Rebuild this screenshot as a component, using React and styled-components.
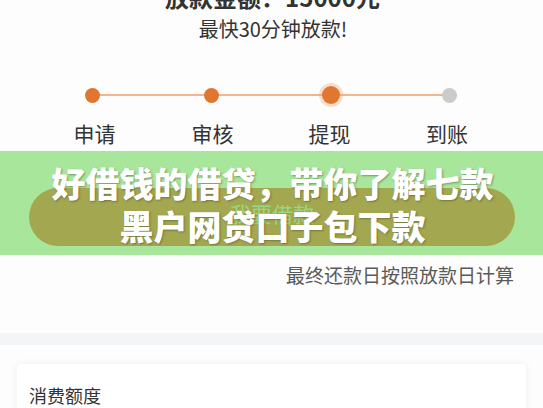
import React from "react";
import styled, { createGlobalStyle } from "styled-components";

const Global = createGlobalStyle`
  html, body { margin: 0; padding: 0; background: #fdfdfd; }
  body { font-family: "Noto Sans CJK SC", "Noto Sans", sans-serif; overflow: hidden; }
`;

const Page = styled.div`
  width: 543px;
  height: 408px;
  overflow: hidden;
  background: #fdfdfd;
`;

const Title = styled.div`
  margin-top: -17px;
  text-align: center;
  font-size: 24px;
  line-height: 28px;
  font-weight: 700;
  color: #333;
  padding-left: 2px;
`;

const Subtitle = styled.div`
  margin-top: 5px;
  text-align: center;
  font-size: 20px;
  line-height: 26px;
  color: #333;
  padding-left: 3px;
`;

const Steps = styled.div`
  margin-top: 42px;
  margin-left: 33px;
  width: 476px;
  display: grid;
  grid-template-columns: repeat(4, 119px);
  position: relative;
  &::before {
    content: "";
    position: absolute;
    left: 60px;
    right: 59px;
    top: 10px;
    height: 2px;
    background: #f2b68b;
  }
`;

const Step = styled.div`
  display: flex;
  flex-direction: column;
  align-items: center;
  gap: 13px;
`;

const DotWrap = styled.div`
  height: 22px;
  display: flex;
  align-items: center;
  justify-content: center;
  position: relative;
`;

const Dot = styled.span`
  display: block;
  width: ${(p) => (p.$active ? 18 : 15)}px;
  height: ${(p) => (p.$active ? 18 : 15)}px;
  border-radius: 50%;
  background: ${(p) => (p.$done ? "#e07630" : "#cbcbcb")};
  box-shadow: ${(p) => (p.$active ? "0 0 0 3px rgba(240,160,110,0.35)" : "none")};
`;

const StepLabel = styled.div`
  font-size: 21px;
  line-height: 28px;
  color: #333;
  margin-left: ${(p) => p.$shift || 0}px;
`;

const Banner = styled.div`
  margin-top: 4px;
  height: 104px;
  background: #a8e69b;
  position: relative;
  padding-top: 37px;
  box-sizing: border-box;
`;

const Pill = styled.div`
  margin: 0 28px 0 29px;
  height: 58px;
  border-radius: 29px;
  background: #a3a74f;
  display: flex;
  align-items: center;
  justify-content: center;
  font-size: 21px;
  color: #97d781;
  padding-bottom: 8px;
  box-sizing: border-box;
`;

const Headline = styled.div`
  position: absolute;
  left: 0;
  right: 0;
  top: 10px;
  text-align: center;
  font-size: 34px;
  line-height: 43px;
  font-weight: 900;
  color: #ffffff;
  padding-left: 2px;
  text-shadow: 1px 1px 2px rgba(60, 60, 40, 0.45);
`;

const Note = styled.div`
  margin-top: 7px;
  text-align: right;
  padding-right: 29px;
  font-size: 19px;
  line-height: 26px;
  color: #5a5a5a;
`;

const Separator = styled.div`
  margin-top: 45px;
  height: 12px;
  background: #f4f5f7;
`;

const Card = styled.div`
  margin: 19px 17px 0 17px;
  height: 80px;
  background: #ffffff;
  border-radius: 4px;
  box-shadow: 0 0 8px rgba(0, 0, 0, 0.06);
  padding: 19px 12px;
`;

const CardTitle = styled.div`
  font-size: 18px;
  line-height: 24px;
  color: #333;
`;

const steps = [
  { label: "申请", done: true, shift: 4 },
  { label: "审核", done: true, shift: 2 },
  { label: "提现", done: true, active: true, shift: -2 },
  { label: "到账", done: false, shift: -5 },
];

export default function App() {
  return (
    <Page>
      <Global />
      <Title>放款金额：15000元</Title>
      <Subtitle>最快30分钟放款!</Subtitle>
      <Steps>
        {steps.map((s) => (
          <Step key={s.label}>
            <DotWrap>
              <Dot $done={s.done} $active={s.active} />
            </DotWrap>
            <StepLabel $shift={s.shift}>{s.label}</StepLabel>
          </Step>
        ))}
      </Steps>
      <Banner>
        <Pill>我要借款</Pill>
        <Headline>
          好借钱的借贷，带你了解七款
          <br />
          黑户网贷口子包下款
        </Headline>
      </Banner>
      <Note>最终还款日按照放款日计算</Note>
      <Separator />
      <Card>
        <CardTitle>消费额度</CardTitle>
      </Card>
    </Page>
  );
}
